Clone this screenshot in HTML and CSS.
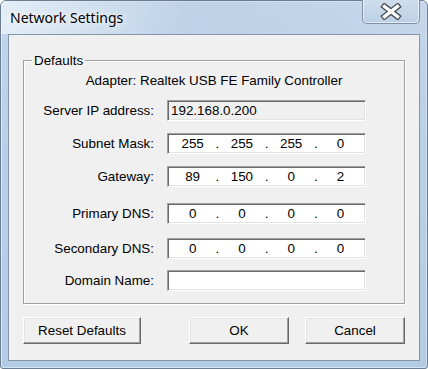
FILE: index.html
```html
<!DOCTYPE html>
<html>
<head>
    <title>Network Settings</title>
    <link rel="stylesheet" href="styles.css">
</head>
<body>
    <div class="window">
        <div class="titlebar">
            <span class="title">Network Settings</span>
            <button class="close" aria-label="Close">
                <svg width="24" height="17" viewBox="0 0 24 17">
                    <path d="M5.5 3.5 L18.5 13.5 M18.5 3.5 L5.5 13.5" stroke="#4a4f57" stroke-width="6" stroke-linecap="square"/>
                    <path d="M5.5 3.5 L18.5 13.5 M18.5 3.5 L5.5 13.5" stroke="#fff" stroke-width="3.4" stroke-linecap="square"/>
                </svg>
            </button>
        </div>

        <div class="client">
            <fieldset class="group">
                <legend>Defaults</legend>
                <p class="adapter">Adapter: Realtek USB FE Family Controller</p>

                <div class="rows">
                    <div class="row">
                        <label>Server IP address:</label>
                        <div class="field readonly">192.168.0.200</div>
                    </div>
                    <div class="row">
                        <label>Subnet Mask:</label>
                        <div class="field ip"><span>255</span><i>.</i><span>255</span><i>.</i><span>255</span><i>.</i><span>0</span></div>
                    </div>
                    <div class="row">
                        <label>Gateway:</label>
                        <div class="field ip"><span>89</span><i>.</i><span>150</span><i>.</i><span>0</span><i>.</i><span>2</span></div>
                    </div>
                    <div class="row more">
                        <label>Primary DNS:</label>
                        <div class="field ip"><span>0</span><i>.</i><span>0</span><i>.</i><span>0</span><i>.</i><span>0</span></div>
                    </div>
                    <div class="row some">
                        <label>Secondary DNS:</label>
                        <div class="field ip"><span>0</span><i>.</i><span>0</span><i>.</i><span>0</span><i>.</i><span>0</span></div>
                    </div>
                    <div class="row less">
                        <label>Domain Name:</label>
                        <div class="field"></div>
                    </div>
                </div>
            </fieldset>

            <div class="buttons">
                <button class="btn reset">Reset Defaults</button>
                <button class="btn ok">OK</button>
                <button class="btn">Cancel</button>
            </div>
        </div>
    </div>
</body>
</html>
```

FILE: styles.css
```css
body {
    margin: 0;
    font-family: 'Liberation Sans', Arial, sans-serif;
    font-size: 13.4px;
    color: #000;
    background: #fff;
}
.window {
    width: 428px;
    height: 369px;
    box-sizing: border-box;
    border: 1px solid #6b7d93;
    border-radius: 6px 6px 3px 3px;
    background: linear-gradient(180deg, #c3d6eb 0%, #b9d0e8 40%, #b3cbe5 100%);
    box-shadow: inset 1px 1px #dce8f4, inset -1px -1px #d3e1ef;
    display: flex;
    flex-direction: column;
}
.titlebar {
    height: 33px;
    display: flex;
    align-items: flex-start;
    justify-content: space-between;
    background: linear-gradient(90deg, rgba(232,240,248,0.9) 0%, rgba(214,228,242,0.7) 22%, rgba(178,200,224,0.3) 45%, rgba(190,208,228,0.2) 75%, rgba(200,216,234,0.5) 100%);
    border-radius: 5px 5px 0 0;
}
.title {
    font-family: 'Noto Sans', sans-serif;
    font-size: 14px;
    margin: 7px 0 0 9px;
    color: #000;
    text-shadow: 0 0 6px #fff, 0 0 10px #fff;
}
.close {
    width: 58px;
    height: 24px;
    margin: -1px 7px 0 0;
    padding: 0;
    border: 1px solid #7f90a6;
    border-top: none;
    border-radius: 0 0 5px 5px;
    background: linear-gradient(180deg, #cfdeee, #bccfe5);
    box-shadow: inset 1px 0 rgba(255,255,255,0.6), inset -1px -1px rgba(255,255,255,0.6);
    display: flex;
    align-items: center;
    justify-content: center;
}
.client {
    margin: 0 7px 7px 7px;
    flex: 1;
    border: 1px solid #8596ab;
    background: #f0f0f0;
    display: flex;
    flex-direction: column;
    padding: 0 14px;
}
.group {
    margin: 18px 0 0 0;
    padding: 5px 0 12px 0;
    border: 1px solid #a0a0a0;
    box-shadow: 1px 1px #fff, inset 1px 1px #fff;
    min-width: 0;
}
.group legend {
    margin-left: 8px;
    padding: 0 2px;
    line-height: 15px;
}
.adapter {
    margin: 0;
    text-align: center;
    line-height: 15px;
}
.rows {
    margin-top: 12px;
    display: flex;
    flex-direction: column;
    gap: 12px;
}
.row {
    display: flex;
    align-items: center;
    gap: 13px;
}
.row.more { margin-top: 4px; }
.row.some { margin-top: 2px; }
.row.less { margin-top: -1px; }
.row label {
    width: 130px;
    text-align: right;
}
.field {
    width: 199px;
    height: 21px;
    box-sizing: border-box;
    border: 1px solid;
    border-color: #a0a0a0 #fff #fff #a0a0a0;
    box-shadow: inset 1px 1px #696969, inset -1px -1px #e3e3e3;
    background: #fff;
    line-height: 19px;
    padding: 0 3px;
}
.field.readonly {
    background: #f0f0f0;
}
.field.ip {
    display: grid;
    grid-template-columns: 1fr 4px 1fr 4px 1fr 4px 1fr;
    padding: 0 2px;
}
.field.ip span {
    text-align: center;
}
.field.ip i {
    font-style: normal;
    text-align: center;
}
.buttons {
    margin-top: 13px;
    display: flex;
    gap: 16px;
}
.btn {
    width: 100px;
    height: 27px;
    font-family: inherit;
    font-size: 13.4px;
    color: #000;
    background: #f0f0f0;
    border: 1px solid;
    border-color: #fff #696969 #696969 #fff;
    box-shadow: inset -1px -1px #a0a0a0, inset 1px 1px #e3e3e3;
    padding: 0;
}
.btn.reset {
    width: 118px;
}
.btn.ok {
    margin-left: auto;
}
```
